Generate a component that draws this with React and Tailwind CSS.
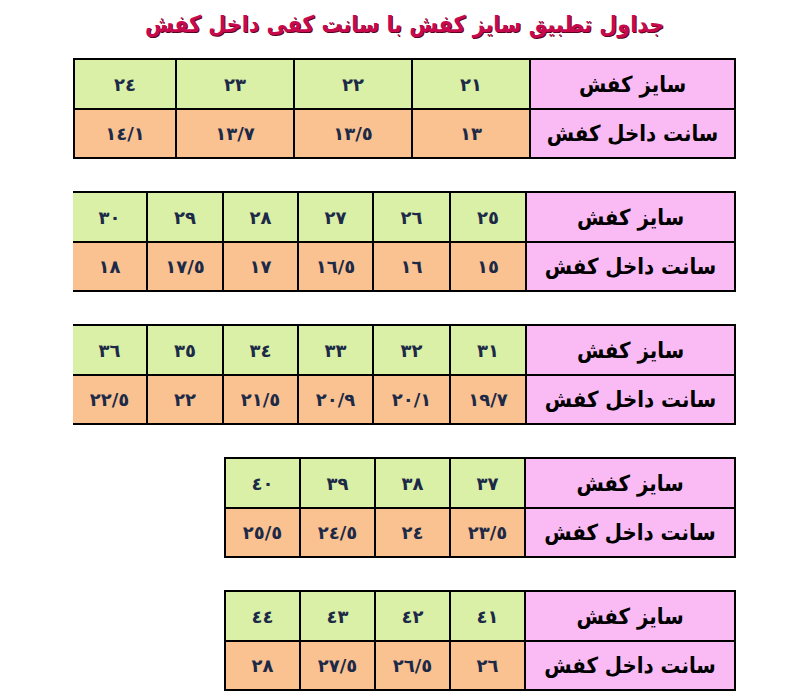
import React from 'react'

const labels = ['سایز کفش', 'سانت داخل کفش']

const tables = [
    {
        cols: 'grid-cols-[203px_116px_116px_116px_100px]',
        width: 'w-[663px]',
        sizes: ['٢١', '٢٢', '٢٣', '٢٤'],
        cm: ['١٣', '١٣/٥', '١٣/٧', '١٤/١'],
    },
    {
        cols: 'grid-cols-[207px_74px_75px_73px_73px_74px_73px]',
        width: 'w-[663px]',
        sizes: ['٢٥', '٢٦', '٢٧', '٢٨', '٢٩', '٣٠'],
        cm: ['١٥', '١٦', '١٦/٥', '١٧', '١٧/٥', '١٨'],
    },
    {
        cols: 'grid-cols-[207px_74px_75px_73px_73px_74px_73px]',
        width: 'w-[663px]',
        sizes: ['٣١', '٣٢', '٣٣', '٣٤', '٣٥', '٣٦'],
        cm: ['١٩/٧', '٢٠/١', '٢٠/٩', '٢١/٥', '٢٢', '٢٢/٥'],
    },
    {
        cols: 'grid-cols-[208px_73px_73px_73px_73px]',
        width: 'w-[512px]',
        sizes: ['٣٧', '٣٨', '٣٩', '٤٠'],
        cm: ['٢٣/٥', '٢٤', '٢٤/٥', '٢٥/٥'],
    },
    {
        cols: 'grid-cols-[208px_73px_73px_73px_73px]',
        width: 'w-[512px]',
        sizes: ['٤١', '٤٢', '٤٣', '٤٤'],
        cm: ['٢٦', '٢٦/٥', '٢٧/٥', '٢٨'],
    },
]

const SizeTable = ({ t }) => {
    const rows = [t.sizes, t.cm]
    return (
        <div dir="rtl" className={`self-end grid ${t.cols} grid-rows-[48px_47px] gap-[2px] bg-black p-[2px] ${t.width}`}>
            {rows.map((row, r) => (
                <React.Fragment key={r}>
                    <div className="bg-[#fabbf5] flex items-center justify-center text-[22px] font-bold text-black font-['DejaVu_Sans_Condensed','DejaVu_Sans',sans-serif]">
                        {labels[r]}
                    </div>
                    {row.map((v, i) => (
                        <div
                            key={i}
                            dir="ltr"
                            className={`${r === 0 ? 'bg-[#daf0a6]' : 'bg-[#fbc291]'} flex items-center justify-center text-[18px] font-bold text-[#1c2a47]`}
                        >
                            {v}
                        </div>
                    ))}
                </React.Fragment>
            ))}
        </div>
    )
}

export default function App() {
    return (
        <div className="w-[809px] h-[700px] bg-white font-['DejaVu_Sans',sans-serif]">
            <h1 dir="rtl" className="pt-[7px] h-[58px] text-center text-[23px] font-bold text-[#c70a4d] [text-shadow:1px_1px_0_#5a0020] font-['DejaVu_Sans_Condensed','DejaVu_Sans',sans-serif]">
                جداول تطبیق سایز کفش با سانت کفی داخل کفش
            </h1>
            <div className="w-[663px] mx-auto flex flex-col gap-[32px]">
                {tables.map((t, i) => (
                    <SizeTable key={i} t={t} />
                ))}
            </div>
        </div>
    )
}
